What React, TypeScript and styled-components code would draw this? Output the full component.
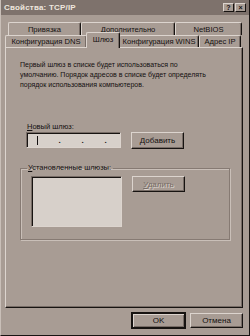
import React from 'react';
import styled, { createGlobalStyle, css } from 'styled-components';

const C = {
  face: '#a89c94',
  light: '#dcd4ce',
  shadow: '#776c66',
  dark: '#171311',
  title: '#7e726c',
  titleText: '#eee6de',
  field: '#d7d0ca',
  etchDark: '#867a73',
  etchLight: '#c9bfb8',
};

const Global = createGlobalStyle`
  html, body { margin: 0; padding: 0; background: ${C.face}; }
  body { font-family: "Liberation Sans", Arial, sans-serif; color: #141010; }
  * { box-sizing: border-box; }
`;

const Window = styled.div`
  width: 250px;
  height: 336px;
  background: ${C.face};
  display: flex;
  flex-direction: column;
  border-left: 1px solid ${C.etchLight};
  border-right: 1px solid ${C.dark};
  border-bottom: 1px solid ${C.dark};
`;

const TitleBar = styled.div`
  height: 15px;
  background: ${C.title};
  display: flex;
  align-items: center;
  justify-content: space-between;
  padding: 0 3px 0 3px;
`;

const TitleText = styled.span`
  color: ${C.titleText};
  font-size: 8px;
  font-weight: bold;
  letter-spacing: 0.2px;
`;

const TitleButtons = styled.div`
  display: flex;
  gap: 1px;
`;

const TitleButton = styled.div`
  width: 11px;
  height: 9px;
  background: ${C.face};
  border-top: 1px solid ${C.light};
  border-left: 1px solid ${C.light};
  border-right: 1px solid ${C.dark};
  border-bottom: 1px solid ${C.dark};
  font-size: 7px;
  font-weight: bold;
  line-height: 7px;
  text-align: center;
  color: #141010;
`;

const Body = styled.div`
  flex: 1;
  display: flex;
  flex-direction: column;
  padding: 7px 6px 0 4px;
`;

const TabStrip = styled.div`
  display: flex;
  flex-direction: column;
`;

const TabRow = styled.div<{ $indent?: number }>`
  display: flex;
  padding-left: ${(p) => p.$indent ?? 0}px;
  align-items: flex-end;
  height: ${(p) => (p.$indent ? 13 : 12)}px;
`;

const Tab = styled.div<{ $w: number; $sel?: boolean }>`
  width: ${(p) => p.$w}px;
  height: 100%;
  background: ${C.face};
  border-top: 1px solid ${C.light};
  border-left: 1px solid ${C.light};
  border-right: 1px solid ${C.dark};
  border-radius: 2px 2px 0 0;
  box-shadow: inset -1px 0 0 ${C.shadow};
  font-size: 7.6px;
  display: flex;
  align-items: center;
  justify-content: center;
  white-space: nowrap;
  ${(p) =>
    p.$sel &&
    css`
      height: 16px;
      margin: 0 -1px -1px -1px;
      position: relative;
      z-index: 2;
      align-items: flex-start;
      padding-top: 2px;
    `}
`;

const Panel = styled.div`
  height: 261px;
  border-top: 1px solid ${C.light};
  border-left: 1px solid ${C.light};
  border-right: 1px solid ${C.dark};
  border-bottom: 1px solid ${C.dark};
  box-shadow: inset -1px -1px 0 ${C.shadow};
  padding: 12px 10px 0 14px;
  display: flex;
  flex-direction: column;
`;

const Para = styled.p`
  margin: 0;
  font-size: 7px;
  line-height: 10px;
  white-space: nowrap;
`;

const Label = styled.div`
  font-size: 7.5px;
  margin: 32px 0 1px 7px;
  line-height: 9px;
`;

const U = styled.span`
  text-decoration: underline;
`;

const Row = styled.div`
  display: flex;
  align-items: flex-start;
  gap: 10px;
  padding-left: 6px;
`;

const Field = styled.div`
  width: 95px;
  height: 16px;
  background: ${C.field};
  border-top: 1px solid ${C.shadow};
  border-left: 1px solid ${C.shadow};
  border-right: 1px solid ${C.light};
  border-bottom: 1px solid ${C.light};
  box-shadow: inset 1px 1px 0 ${C.dark};
  display: flex;
  align-items: center;
  padding-left: 10px;
  font-size: 8px;
`;

const Caret = styled.span`
  width: 1px;
  height: 9px;
  background: #141010;
  margin-right: 10px;
`;

const Dot = styled.span`
  width: 23px;
  text-align: center;
  font-weight: bold;
  line-height: 8px;
  padding-top: 2px;
`;

const Button = styled.div<{ $w?: number; $h?: number; $def?: boolean; $dis?: boolean }>`
  width: ${(p) => p.$w ?? 53}px;
  height: ${(p) => p.$h ?? 17}px;
  background: ${C.face};
  border-top: 1px solid ${C.light};
  border-left: 1px solid ${C.light};
  border-right: 1px solid ${C.dark};
  border-bottom: 1px solid ${C.dark};
  box-shadow: inset -1px -1px 0 ${C.shadow};
  font-size: 8px;
  display: flex;
  align-items: center;
  justify-content: center;
  ${(p) =>
    p.$def &&
    css`
      outline: 1px solid ${C.dark};
      outline-offset: 0;
      border-top-color: ${C.dark};
      border-left-color: ${C.dark};
      box-shadow: inset 1px 1px 0 ${C.light}, inset -1px -1px 0 ${C.shadow};
    `}
  ${(p) =>
    p.$dis &&
    css`
      color: ${C.shadow};
      text-shadow: 1px 1px 0 ${C.light};
    `}
`;

const Group = styled.fieldset`
  margin: 15px 0 0 0;
  width: 210px;
  height: 76px;
  padding: 0 0 0 10px;
  border: 1px solid ${C.etchDark};
  box-shadow: 1px 1px 0 ${C.etchLight}, inset 1px 1px 0 ${C.etchLight};
  display: flex;
  gap: 10px;
  align-items: flex-start;
`;

const Legend = styled.legend`
  font-size: 7.5px;
  padding: 0 2px 0 1px;
  margin-left: -4px;
  line-height: 8px;
`;

const GroupInner = styled.div`
  display: flex;
  gap: 10px;
  padding-top: 4px;
`;

const ListBox = styled.div`
  width: 91px;
  height: 51px;
  background: ${C.field};
  border-top: 1px solid ${C.shadow};
  border-left: 1px solid ${C.shadow};
  border-right: 1px solid ${C.light};
  border-bottom: 1px solid ${C.light};
  box-shadow: inset 1px 1px 0 ${C.dark};
`;

const Footer = styled.div`
  display: flex;
  justify-content: flex-end;
  gap: 5px;
  padding: 5px 0 0 0;
`;

export default function App() {
  return (
    <>
      <Global />
      <Window>
        <TitleBar>
          <TitleText>Свойства: TCP/IP</TitleText>
          <TitleButtons>
            <TitleButton>?</TitleButton>
            <TitleButton>×</TitleButton>
          </TitleButtons>
        </TitleBar>
        <Body>
          <TabStrip>
            <TabRow $indent={3}>
              <Tab $w={73}>Привязка</Tab>
              <Tab $w={94}>Дополнительно</Tab>
              <Tab $w={67}>NetBIOS</Tab>
            </TabRow>
            <TabRow>
              <Tab $w={82}>Конфигурация DNS</Tab>
              <Tab $w={34} $sel>Шлюз</Tab>
              <Tab $w={80}>Конфигурация WINS</Tab>
              <Tab $w={42}>Адрес IP</Tab>
            </TabRow>
          </TabStrip>
          <Panel>
            <Para>
              Первый шлюз в списке будет использоваться по
              <br />
              умолчанию. Порядок адресов в списке будет определять
              <br />
              порядок использования компьютеров.
            </Para>
            <Label>
              <U>Н</U>овый шлюз:
            </Label>
            <Row>
              <Field>
                <Caret />
                <Dot>.</Dot>
                <Dot>.</Dot>
                <Dot>.</Dot>
              </Field>
              <Button>
                <span>
                  <U>Д</U>обавить
                </span>
              </Button>
            </Row>
            <Group>
              <Legend>
                <U>У</U>становленные шлюзы:
              </Legend>
              <GroupInner>
                <ListBox />
                <Button $h={16} $dis>
                  <span>
                    <U>У</U>далить
                  </span>
                </Button>
              </GroupInner>
            </Group>
          </Panel>
          <Footer>
            <Button $h={15} $def>
              OK
            </Button>
            <Button $h={15}>Отмена</Button>
          </Footer>
        </Body>
      </Window>
    </>
  );
}
